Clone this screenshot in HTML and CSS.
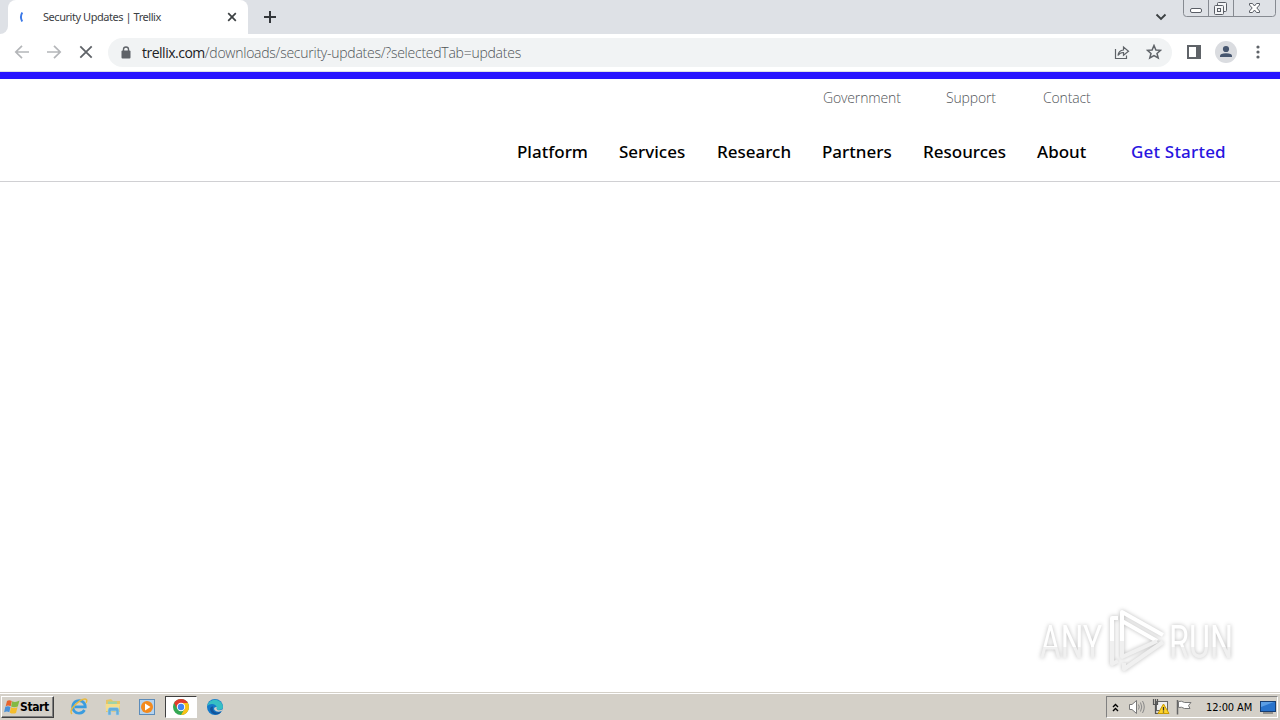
FILE: index.html
```html
<!DOCTYPE html>
<html lang="en">
<head>
    <meta charset="UTF-8">
    <title>Security Updates | Trellix</title>
    <link rel="stylesheet" href="styles.css">
</head>
<body>

<div class="tabstrip">
    <div class="tab-edge"></div>
    <div class="tab">
        <svg class="spinner" width="16" height="16" viewBox="0 0 16 16"><path d="M6.3 3.5Q3.6 7.8 6.2 12.5" fill="none" stroke="#3b78e7" stroke-width="1.9"/></svg>
        <span class="tab-title">Security Updates | Trellix</span>
        <svg class="tab-close" width="10" height="10" viewBox="0 0 10 10"><path d="M1.2 1.2L8.8 8.8M8.8 1.2L1.2 8.8" stroke="#3c4043" stroke-width="1.7"/></svg>
    </div>
    <svg class="new-tab" width="12" height="12" viewBox="0 0 12 12"><path d="M6 0V12M0 6H12" stroke="#33363b" stroke-width="2"/></svg>
    <svg class="tab-search" width="12" height="8" viewBox="0 0 12 8"><path d="M1.5 1.5L6 6L10.5 1.5" fill="none" stroke="#3c4043" stroke-width="1.9"/></svg>
    <svg class="window-buttons" width="94" height="18" viewBox="0 0 94 18">
        <path d="M.5 0V13.5Q.5 16.5 3.5 16.5H89.5Q92.5 16.5 92.5 13.5V0M25.5 0V16M50.5 0V16" fill="none" stroke="#868a91"/>
        <rect x="7.500" y="8.500" width="11" height="4" rx="1.500" fill="#fff" stroke="#5a5e66"/>
        <g fill="#f4f5f7" stroke="#5a5e66">
            <rect x="34.500" y="2.500" width="9" height="9" rx="1"/>
            <rect x="31.500" y="5.500" width="9" height="9" rx="1"/>
            <rect x="34.500" y="8.500" width="3" height="3"/>
        </g>
        <path d="M66.500 3.500H69.500L71.500 6L73.500 3.500H76.500V5L73.800 8L76.500 11V12.500H73.500L71.500 10L69.500 12.500H66.500V11L69.200 8L66.500 5Z" fill="#fff" stroke="#5a5e66"/>
    </svg>
</div>

<div class="toolbar">
    <svg class="nav-icon" width="16" height="16" viewBox="0 0 16 16"><path d="M15 8H2M8 1.800L1.800 8L8 14.200" fill="none" stroke="#b4b6b9" stroke-width="1.700"/></svg>
    <svg class="nav-icon" width="16" height="16" viewBox="0 0 16 16"><path d="M1 8H14M8 1.800L14.200 8L8 14.200" fill="none" stroke="#b4b6b9" stroke-width="1.700"/></svg>
    <svg class="nav-icon" width="16" height="16" viewBox="0 0 16 16"><path d="M2.300 2.300L13.700 13.700M13.700 2.300L2.300 13.700" stroke="#5f6368" stroke-width="1.800"/></svg>
    <div class="address">
        <svg class="lock" width="10" height="13" viewBox="0 0 10 13"><rect x=".5" y="4.500" width="9" height="8" rx="1" fill="#5f6368"/><path d="M2.500 5V3.300Q2.500 1 5 1T7.500 3.300V5" fill="none" stroke="#5f6368" stroke-width="1.400"/></svg>
        <span class="url"><b>trellix.com</b>/downloads/security-updates/?selectedTab=updates</span>
        <svg class="share" width="16" height="16" viewBox="0 0 16 16"><path d="M1.500 5V14.500H12.500V11.500M4 11.500Q4.500 6.500 9.500 6V3L14.500 7.200L9.500 11.200V8.500Q6 8.300 4 11.500Z" fill="none" stroke="#5f6368" stroke-width="1.200"/></svg>
        <svg class="star" width="16" height="16" viewBox="0 0 16 16"><path d="M8 1.500L9.900 6L14.600 6.300L11 9.400L12.200 14L8 11.500L3.800 14L5 9.400L1.400 6.300L6.100 6Z" fill="none" stroke="#5f6368" stroke-width="1.500"/></svg>
    </div>
    <svg class="panel" width="14" height="14" viewBox="0 0 14 14"><rect x="1" y="1" width="12" height="12" fill="#fff" stroke="#5f6368" stroke-width="2"/><path d="M9 1H13V13H9Z" fill="#5f6368"/></svg>
    <svg class="profile" width="22" height="22" viewBox="0 0 22 22"><circle cx="11" cy="11" r="11" fill="#dadce0"/><circle cx="11" cy="8" r="3.100" fill="#46566f"/><path d="M5 16V14.800Q5 12.200 11 12.200T17 14.800V16Z" fill="#46566f"/></svg>
    <svg class="dots" width="4" height="14" viewBox="0 0 4 14"><g fill="#5f6368"><circle cx="2" cy="2" r="1.600"/><circle cx="2" cy="7" r="1.600"/><circle cx="2" cy="12" r="1.600"/></g></svg>
</div>

<header class="site-header">
    <nav class="top-links">
        <a class="government">Government</a>
        <a class="support">Support</a>
        <a class="contact">Contact</a>
    </nav>
    <nav class="main-links">
        <a class="platform">Platform</a>
        <a class="services">Services</a>
        <a class="research">Research</a>
        <a class="partners">Partners</a>
        <a class="resources">Resources</a>
        <a class="about">About</a>
        <a class="get-started">Get Started</a>
    </nav>
</header>

<main class="content">
    <svg class="watermark" width="240" height="72" viewBox="0 0 240 72">
        <defs>
            <linearGradient id="fade" x1="0" y1="0" x2="0" y2="1">
                <stop offset=".6" stop-color="#fff"/>
                <stop offset=".6" stop-color="#f0f0f0"/>
            </linearGradient>
        </defs>
        <g class="mark-text" fill="url(#fade)">
            <text x="10" y="54" textLength="62" lengthAdjust="spacingAndGlyphs">ANY</text>
            <text x="139" y="54" textLength="64" lengthAdjust="spacingAndGlyphs">RUN</text>
        </g>
        <g fill="none" stroke="#fff" stroke-width="4" stroke-linejoin="round">
            <path d="M92 37V8L133 31M92 17L127 37"/>
            <path d="M88 14H82V37"/>
            <path d="M82 37V60L88 57M92 37V53L127 37M133 38L94 65V59" stroke="#f0f0f0"/>
        </g>
    </svg>
</main>

<footer class="taskbar">
    <div class="start">
        <svg width="16" height="16" viewBox="0 0 16 16">
            <path d="M3 2Q5 .5 7.800 2L6.700 7.300Q4 5.800 1.700 7.200Z" fill="#e8642c"/>
            <path d="M8.200 2.300Q11.500 4 15.500 1.500L13.800 7.500Q10 9 7.100 7.500Z" fill="#83b943"/>
            <path d="M1.300 7.800Q4 6.500 6.500 7.900L5.300 13.200Q3 11.800 .1 13.200Z" fill="#4a91d8"/>
            <path d="M6.900 8.200Q10 9.700 13.500 8.200L12 14Q9 15.300 5.800 13.700Z" fill="#f5bd2c"/>
        </svg>
        <span>Start</span>
    </div>
    <div class="launch">
        <svg class="app" width="18" height="18" viewBox="0 0 18 18"><path d="M14.500 12A6.300 6.300 0 1 1 15.300 8.800H4.500" fill="none" stroke="#3a9cdf" stroke-width="2.700"/><path d="M2 16Q-1 13 5 7T15 1Q18 1 16 5" fill="none" stroke="#e9b93c" stroke-width="1.400"/></svg>
        <svg class="app" width="18" height="18" viewBox="0 0 18 18"><path d="M2 2L7 1L9 3H16V14H2Z" fill="#e6c566"/><path d="M4 3.500H13V8H4Z" fill="#9fd3a8"/><path d="M1.500 6H16L15 13H2Z" fill="#f5dd8b"/><path d="M4 17V12Q4 9.500 6 9.500H13Q15 9.500 15 12V17H12V13H7V17Z" fill="#64addb" stroke="#a8d5ee" stroke-width=".6"/></svg>
        <svg class="app" width="18" height="18" viewBox="0 0 18 18"><rect x="1.500" y="1.500" width="15" height="15" fill="#b5d3ef" stroke="#5c8cba"/><circle cx="9" cy="9" r="6" fill="#f38a1e"/><path d="M7 5.500L12.500 9L7 12.500Z" fill="#fff"/></svg>
        <div class="app active">
            <svg width="18" height="18" viewBox="0 0 18 18"><circle cx="9" cy="9" r="8" fill="#34a853"/><path d="M2.100 5A8 8 0 0 1 15.900 5H9L5.500 11Z" fill="#e33b2e"/><path d="M15.900 5A8 8 0 0 1 9 17L12.500 11L9 5Z" fill="#fbc116"/><circle cx="9" cy="9" r="4.200" fill="#fff"/><circle cx="9" cy="9" r="3.200" fill="#4285f4"/></svg>
        </div>
        <svg class="app" width="18" height="18" viewBox="0 0 18 18"><circle cx="9" cy="9" r="8" fill="#1479c9"/><path d="M1.200 8A8 8 0 0 1 17 9Q16.500 12 12.500 12Q10 12 10.700 9.500Q10 6 6 6Q3 6 1.200 8Z" fill="#36bfc4"/><path d="M7 8.500Q6 12 9 14Q12 15.300 15.500 13.500L13 16Q5 18 4 11Q4.500 8 7 8.500Z" fill="#12549c"/><path d="M10.800 9Q10 11 11.500 12Q14 13 17 11L15.700 13Q11 15 8.500 12Q7 9 10.800 9Z" fill="#d4d0c8"/></svg>
    </div>
    <div class="tray">
        <svg class="chevrons" width="7" height="9" viewBox="0 0 7 9"><path d="M1 4L3.500 1.500L6 4M1 8L3.500 5.500L6 8" fill="none" stroke="#000" stroke-width="1.400"/></svg>
        <svg width="18" height="16" viewBox="0 0 18 16"><path d="M1.500 5.500H4L8.500 1.500V14.500L4 10.500H1.500Z" fill="#fff" stroke="#777"/><path d="M10.500 5.500Q12 8 10.500 10.500M12.500 3.500Q15 8 12.500 12.500M14.500 2Q18 8 14.500 14" fill="none" stroke="#888"/></svg>
        <svg width="18" height="16" viewBox="0 0 18 16"><rect x="4.500" y="2.500" width="11" height="9" fill="#eee" stroke="#666"/><path d="M1.500 0V5.500H5.500V0M3.500 0V14.500H8" fill="none" stroke="#555" stroke-width="1.200"/><path d="M11.500 5L17 14.500H6Z" fill="#ffd42a" stroke="#c99a00"/><path d="M11.500 8V11.500M11.500 12.500V13.500" stroke="#333" stroke-width="1.300"/></svg>
        <svg width="18" height="16" viewBox="0 0 18 16"><path d="M1.500 1V15.500" stroke="#666" stroke-width="1.500"/><path d="M2.500 2.500Q5.500 1.500 8.500 3.500H15L12.500 6.500L14 9.500H8.500Q5.500 7.500 2.500 8.500Z" fill="#fff" stroke="#777"/></svg>
        <span class="clock">12:00 AM</span>
        <svg class="desktop" width="16" height="14" viewBox="0 0 16 14"><rect x=".5" y="1.500" width="15" height="10" fill="#2873cc" stroke="#173e73"/><path d="M1 2H14L1 7Z" fill="#5b9ee5"/><path d="M3 13H13" stroke="#555"/></svg>
    </div>
</footer>

</body>
</html>
```
FILE: styles.css
```css
* {
    box-sizing: border-box;
}
body {
    display: flex;
    flex-direction: column;
    width: 1280px;
    height: 720px;
    margin: 0;
    overflow: hidden;
    background: #fff;
    font-family: "DejaVu Sans Condensed", "DejaVu Sans", sans-serif;
}
svg {
    display: block;
    flex-shrink: 0;
}
span, a {
    white-space: nowrap;
}

/* browser tabs */
.tabstrip {
    display: flex;
    height: 34px;
    background: #dee1e6;
}
.tab-edge {
    width: 8px;
    background: #fff;
}
.tab-edge::before {
    content: "";
    display: block;
    height: 34px;
    background: #dee1e6;
    border-bottom-right-radius: 8px;
}
.tab {
    display: flex;
    align-items: center;
    width: 240px;
    padding: 0 11px 0 8px;
    background: #fff;
    border-radius: 8px 8px 0 0;
}
.tab-title {
    flex: 1;
    margin: -2px 0 0 11px;
    font-family: "Noto Sans", sans-serif;
    font-size: 11px;
    letter-spacing: -0.45px;
    color: #3c4043;
}
.new-tab {
    margin: 11px 0 0 16px;
}
.tab-search {
    margin: 13px 16px 0 auto;
}
.window-buttons {
    margin-right: 3px;
}

/* toolbar */
.toolbar {
    display: flex;
    align-items: center;
    height: 38px;
    padding: 0 20px 1px 14px;
    border-bottom: 1px solid #dfe1e5;
}
.nav-icon {
    margin-right: 16px;
}
.nav-icon:nth-child(3) {
    margin-right: 14px;
}
.address {
    display: flex;
    flex-shrink: 0;
    align-items: center;
    width: 1064px;
    height: 29px;
    padding: 0 10px 0 13px;
    background: #f1f3f4;
    border-radius: 15px;
}
.url {
    flex: 1;
    margin-left: 11px;
    font-family: "Open Sans", sans-serif;
    font-size: 14px;
    font-weight: 300;
    letter-spacing: -0.25px;
    color: #4f5357;
}
.url b {
    font-weight: 400;
    letter-spacing: -0.5px;
    color: #202124;
}
.star {
    margin-left: 16px;
}
.panel {
    margin-left: 15px;
}
.profile {
    margin-left: 14px;
}
.dots {
    margin-left: 19px;
}

/* site header */
.site-header {
    height: 110px;
    border-top: 7px solid #2814ff;
    border-bottom: 1px solid #d0d0d3;
}
.top-links {
    display: flex;
    padding: 9px 0 0 823px;
    font-family: "Open Sans", sans-serif;
    font-size: 14px;
    font-weight: 300;
    line-height: 20px;
    letter-spacing: -0.15px;
    color: #53565a;
}
.government {
    width: 123px;
}
.support {
    width: 97px;
}
.main-links {
    display: flex;
    padding: 32px 0 0 517px;
    font-family: "Noto Sans", sans-serif;
    font-size: 17px;
    font-weight: 500;
    line-height: 24px;
    color: #000;
}
.platform {
    width: 102px;
}
.services {
    width: 98px;
}
.research {
    width: 105px;
}
.partners {
    width: 101px;
}
.resources {
    width: 114px;
}
.about {
    width: 94px;
}
.get-started {
    letter-spacing: 0.2px;
    color: #2814e0;
}

/* empty page area */
.content {
    display: flex;
    flex: 1;
    justify-content: flex-end;
    align-items: flex-end;
    padding: 0 10px 16px 0;
}
.watermark {
    filter: drop-shadow(0 0 2px #bbb);
}
.mark-text {
    font-family: Roboto, "Liberation Sans", sans-serif;
    font-size: 46px;
}

/* taskbar */
.taskbar {
    display: flex;
    align-items: center;
    height: 28px;
    padding-top: 1px;
    background: #d4d0c8;
    border-top: 1px solid #d4d0c8;
    box-shadow: inset 0 1px #fff;
}
.start {
    display: flex;
    align-items: center;
    width: 53px;
    height: 22px;
    margin-left: 1px;
    padding-left: 2px;
    border: 1px solid;
    border-color: #fff #404040 #404040 #fff;
    box-shadow: inset -1px -1px #808080;
    font-size: 12px;
    font-weight: bold;
    letter-spacing: -0.4px;
}
.launch {
    display: flex;
    align-items: center;
    margin-left: 16px;
}
.app {
    margin-right: 16px;
}
.app.active {
    width: 32px;
    height: 22px;
    margin: 0 9px 0 -7px;
    padding: 1px 6px;
    background: #fff;
    border: 1px solid;
    border-color: #404040 #fff #fff #404040;
}
.tray {
    display: flex;
    align-items: center;
    width: 172px;
    height: 22px;
    margin: 0 2px 0 auto;
    padding: 0 1px 0 5px;
    border: 1px solid;
    border-color: #808080 #fff #fff #808080;
}
.tray svg {
    margin-right: 6px;
}
.tray .chevrons {
    margin-right: 9px;
}
.clock {
    margin-left: 6px;
    font-size: 11px;
    letter-spacing: -0.1px;
}
.tray .desktop {
    margin: 0 0 0 auto;
}
```
